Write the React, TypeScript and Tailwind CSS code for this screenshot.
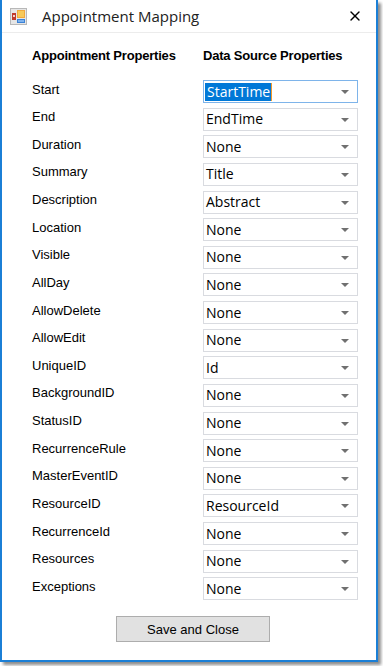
import { X } from "lucide-react";

const rows: [string, string][] = [
  ["Start", "StartTime"],
  ["End", "EndTime"],
  ["Duration", "None"],
  ["Summary", "Title"],
  ["Description", "Abstract"],
  ["Location", "None"],
  ["Visible", "None"],
  ["AllDay", "None"],
  ["AllowDelete", "None"],
  ["AllowEdit", "None"],
  ["UniqueID", "Id"],
  ["BackgroundID", "None"],
  ["StatusID", "None"],
  ["RecurrenceRule", "None"],
  ["MasterEventID", "None"],
  ["ResourceID", "ResourceId"],
  ["RecurrenceId", "None"],
  ["Resources", "None"],
  ["Exceptions", "None"],
];

const segoe = { fontFamily: '"Open Sans", "Noto Sans", sans-serif' };
const arial = { fontFamily: '"Liberation Sans", Arial, sans-serif' };

function AppIcon() {
  return (
    <svg width="17" height="17" viewBox="0 0 17 17">
      <rect x="0.5" y="0.5" width="16" height="16" fill="#e6e6e6" stroke="#b8b8b8" />
      <rect x="2" y="5" width="4" height="7" fill="#c0392b" />
      <rect x="3" y="7" width="2" height="2" fill="#f3d0c8" />
      <rect x="7" y="2" width="8" height="8" fill="#f2a93b" />
      <rect x="8" y="3" width="6" height="6" fill="#f7c95a" />
      <rect x="7" y="11" width="8" height="4" fill="#3b82d6" />
      <rect x="8" y="12" width="6" height="2" fill="#7fb3ee" />
    </svg>
  );
}

function Combo({ value, focused }: { value: string; focused?: boolean }) {
  return (
    <div
      className={
        "relative w-[155px] h-[23px] bg-white border flex items-center " +
        (focused ? "border-[#7eb4ea]" : "border-[#d9dbe0]")
      }
    >
      {focused ? (
        <span
          className="ml-[1px] h-[18px] pl-[2px] pr-[1px] bg-[#0078d7] text-white text-[14px] leading-[18px] border-r border-[#f39a2a]"
          style={segoe}
        >
          {value}
        </span>
      ) : (
        <span className="pl-[2px] text-[14px] leading-[18px] text-black" style={segoe}>
          {value}
        </span>
      )}
      <svg
        className="absolute right-[8px] top-[9px]"
        width="8"
        height="4"
        viewBox="0 0 8 4"
      >
        <path d="M0 0 H8 L4 4 Z" fill="#707070" />
      </svg>
    </div>
  );
}

export default function App() {
  return (
    <div className="w-[383px] h-[666px] bg-white">
      <div className="w-[378px] h-[662px] bg-white border-x-2 border-b-2 border-[#1b7fd6] shadow-[3px_3px_3px_rgba(0,0,0,0.45)] flex flex-col">
        <div className="h-[33px] flex items-center border-b border-[#ececec] bg-white shrink-0">
          <div className="ml-[8px] mt-[1px]">
            <AppIcon />
          </div>
          <span className="ml-[15px] text-[15px] text-[#222]" style={segoe}>
            Appointment Mapping
          </span>
          <X className="ml-auto mr-[13px] w-[16px] h-[16px] text-black" strokeWidth={2} />
        </div>

        <div className="pl-[30px] pt-[15px] flex flex-col">
          <div
            className="grid grid-cols-[171px_155px] text-[13px] leading-[15px] font-bold text-black tracking-[-0.2px]"
            style={arial}
          >
            <span>Appointment Properties</span>
            <span>Data Source Properties</span>
          </div>

          <div className="mt-[17px] flex flex-col gap-[4.64px]">
            {rows.map(([label, value], i) => (
              <div key={label} className="grid grid-cols-[171px_155px] items-center h-[23px]">
                <span className="text-[13px] leading-[15px] text-black pb-[5px]" style={arial}>
                  {label}
                </span>
                <Combo value={value} focused={i === 0} />
              </div>
            ))}
          </div>

          <button
            className="mt-[16px] ml-[84px] w-[154px] h-[26px] bg-[#e1e1e1] border border-[#adadad] text-[13px] text-black"
            style={arial}
          >
            Save and Close
          </button>
        </div>
      </div>
    </div>
  );
}
